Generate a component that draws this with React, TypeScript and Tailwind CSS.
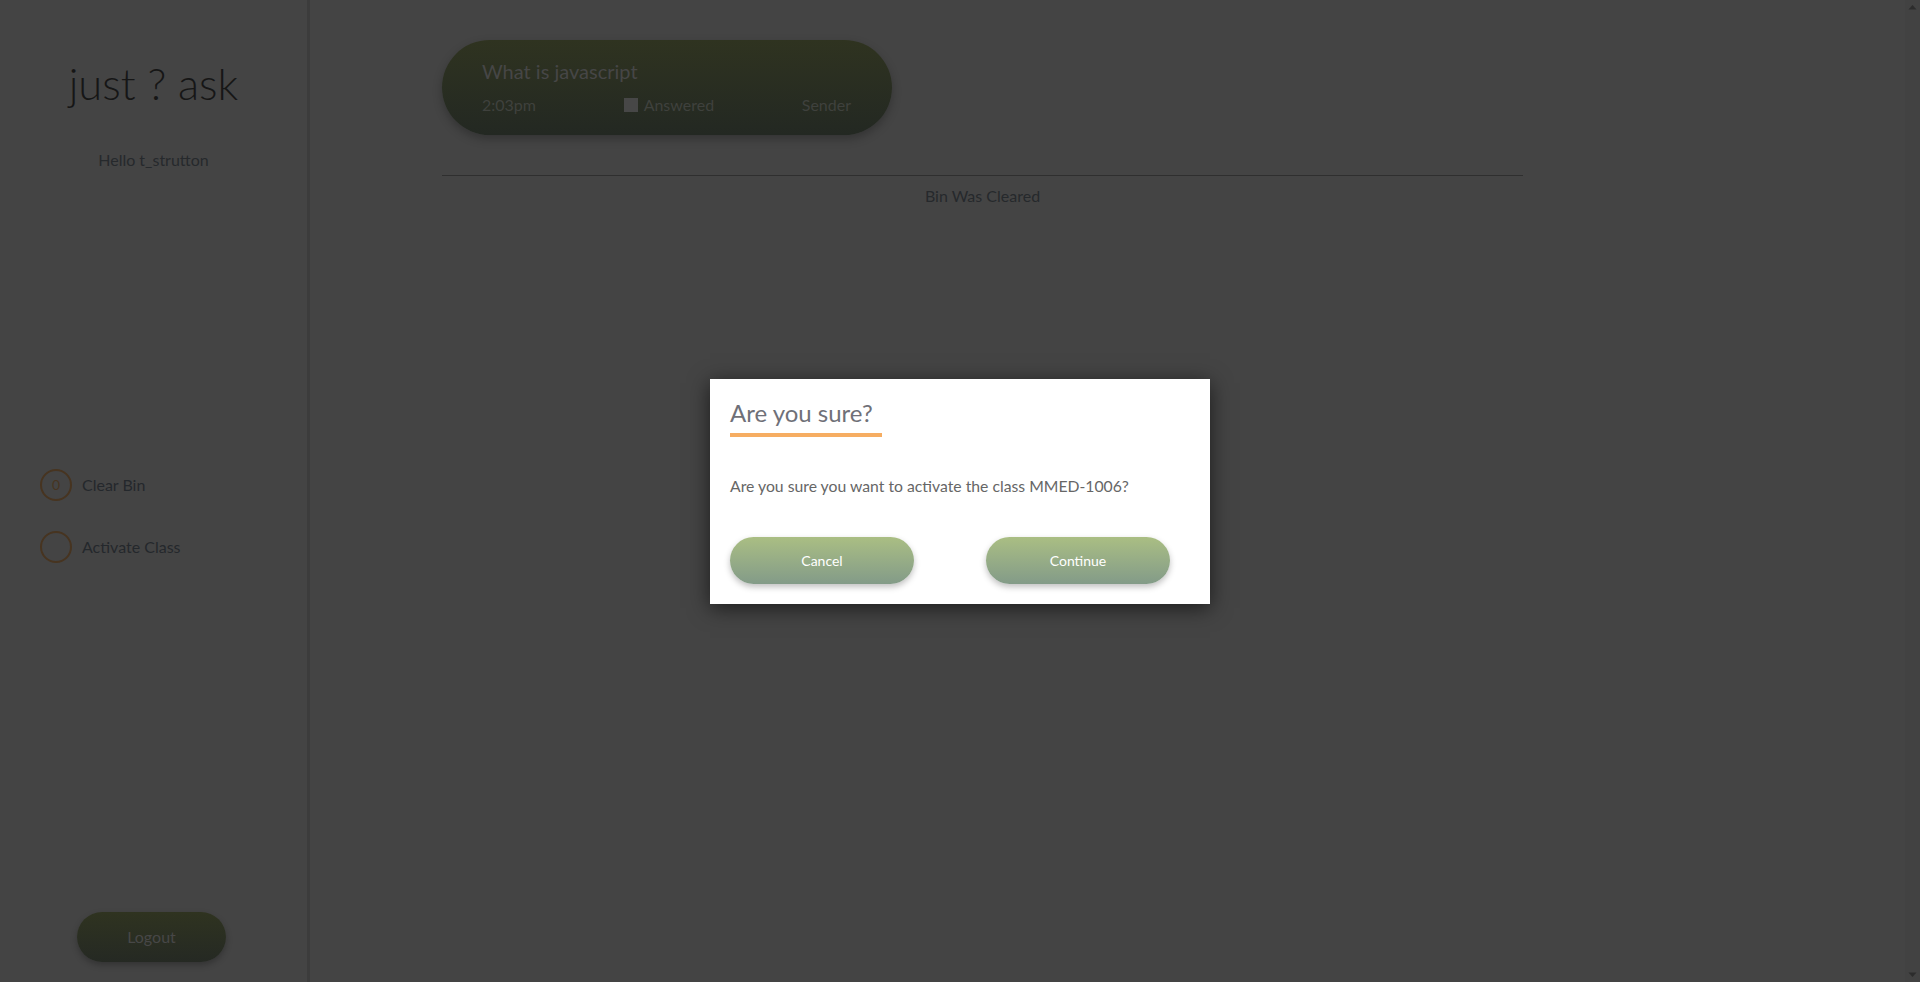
import React from "react";

export default function App() {
  return (
    <div
      className="relative flex h-[982px] w-[1920px] overflow-hidden bg-[#444444]"
      style={{ fontFamily: "Lato, 'Open Sans', sans-serif" }}
    >
      {/* Sidebar */}
      <aside className="flex h-full w-[310px] shrink-0 flex-col border-r-[3px] border-[#3c3c3c] bg-[#444444]">
        <div className="pt-[62px] text-center text-[43.5px] font-light leading-none text-[#161616]">
          just ? ask
        </div>
        <div className="mt-[46px] text-center text-[16px] leading-none text-[#26292c]">
          Hello t_strutton
        </div>
        <div className="mt-[301px] flex flex-col gap-[30px] pl-[40px]">
          <div className="flex items-center gap-[10px]">
            <div className="flex h-[32px] w-[32px] items-center justify-center rounded-full border-2 border-[#473420] text-[14px] text-[#473420]">
              0
            </div>
            <span className="text-[16px] text-[#24282c]">Clear Bin</span>
          </div>
          <div className="flex items-center gap-[10px]">
            <div className="h-[32px] w-[32px] rounded-full border-2 border-[#473420]" />
            <span className="text-[16px] text-[#24282c]">Activate Class</span>
          </div>
        </div>
        <div className="mt-auto mb-[20px] flex justify-center pr-[4px]">
          <div className="flex h-[50px] w-[149px] items-center justify-center rounded-full bg-gradient-to-b from-[#2f3320] to-[#252923] text-[16px] text-[#474747] shadow-[0_3px_6px_rgba(0,0,0,0.25)]">
            Logout
          </div>
        </div>
      </aside>

      {/* Main */}
      <main className="flex-1 pl-[132px] pt-[40px]">
        <div className="w-[1081px]">
          <div className="flex h-[95px] w-[450px] flex-col rounded-full bg-gradient-to-b from-[#2f3320] to-[#232822] pl-[40px] pr-[41px] pt-[19px] shadow-[0_4px_10px_rgba(0,0,0,0.25)]">
            <div className="text-[20px] leading-[24px] text-[#464646]">What is javascript</div>
            <div className="mt-[12px] flex items-center justify-between text-[16px] leading-[20px] text-[#3f413d]">
              <span>2:03pm</span>
              <span className="flex items-center gap-[6px]">
                <span className="inline-block h-[14px] w-[14px] bg-[#474747]" />
                <span>Answered</span>
              </span>
              <span>Sender</span>
            </div>
          </div>
          <div className="mt-[40px] h-px w-full bg-[#2f2f2f]" />
          <div className="mt-[10px] text-center text-[16px] leading-[20px] text-[#26292c]">
            Bin Was Cleared
          </div>
        </div>
      </main>

      {/* Scrollbar */}
      <div className="flex h-full w-[15px] shrink-0 flex-col items-center justify-between bg-[#424242] py-[4px]">
        <svg width="9" height="6" viewBox="0 0 9 6">
          <path d="M0.5 5.5 L4.5 1 L8.5 5.5 Z" fill="#2c2c2c" />
        </svg>
        <svg width="9" height="6" viewBox="0 0 9 6">
          <path d="M0.5 0.5 L4.5 5 L8.5 0.5 Z" fill="#2c2c2c" />
        </svg>
      </div>

      {/* Modal */}
      <div className="absolute inset-0 flex items-center justify-center">
        <div className="flex h-[225px] w-[500px] flex-col bg-white px-[20px] pt-[22px] shadow-[0_4px_20px_rgba(0,0,0,0.6)]">
          <div>
            <h2 className="inline-block border-b-4 border-[#f6ad62] pb-[8px] pr-[9px] text-[24px] leading-none text-[#6f7078]">
              Are you sure?
            </h2>
          </div>
          <p className="mt-[39px] text-[15.75px] leading-[20px] text-[#666666]">
            Are you sure you want to activate the class MMED-1006?
          </p>
          <div className="mt-[41px] flex gap-[72px]">
            <button className="h-[47px] w-[184px] rounded-full bg-gradient-to-b from-[#aabe83] to-[#839b88] text-[14px] text-white shadow-[0_3px_6px_rgba(0,0,0,0.25)]">
              Cancel
            </button>
            <button className="h-[47px] w-[184px] rounded-full bg-gradient-to-b from-[#aabe83] to-[#839b88] text-[14px] text-white shadow-[0_3px_6px_rgba(0,0,0,0.25)]">
              Continue
            </button>
          </div>
        </div>
      </div>
    </div>
  );
}
